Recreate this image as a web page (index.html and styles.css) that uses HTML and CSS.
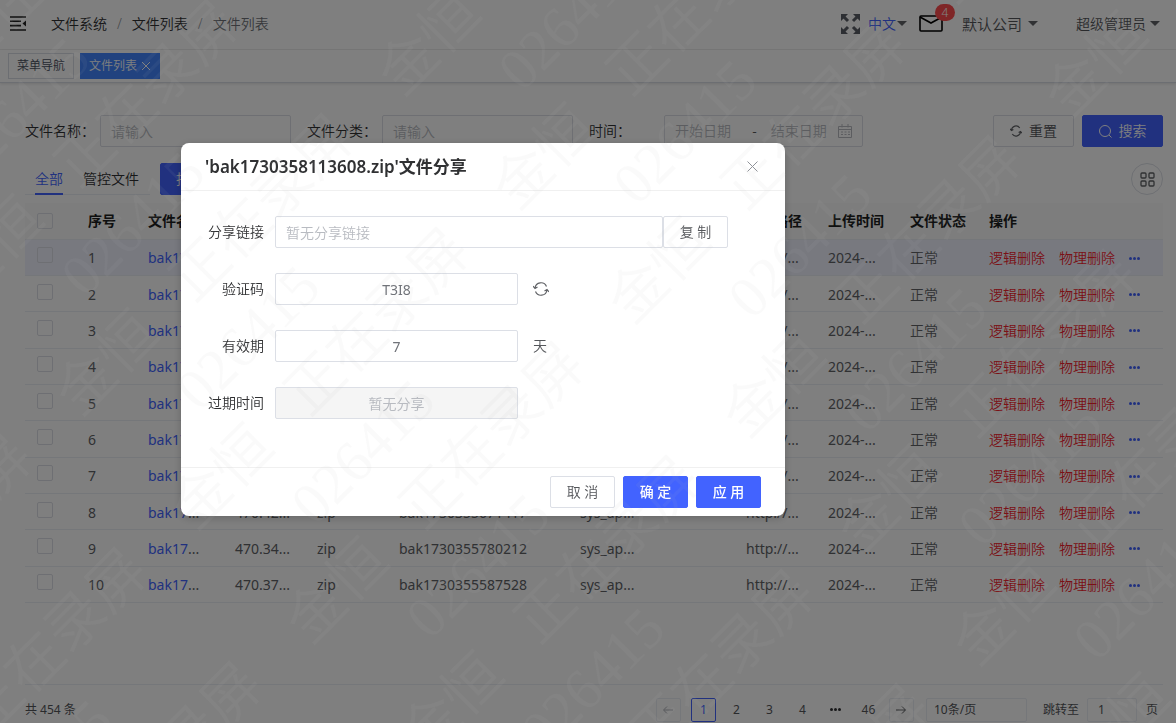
FILE: index.html
```html
<!DOCTYPE html>
<html lang="zh-CN">
<head>
    <meta charset="UTF-8">
    <meta name="viewport" content="width=device-width, initial-scale=1.0">
    <title>文件列表</title>
    <link rel="stylesheet" href="styles.css">
</head>
<body>
    <div class="page">
        <header class="header">
            <button class="icon-btn fold" aria-label="收起菜单">
                <svg width="17" height="15" viewBox="0 0 17 15" fill="none" stroke="#222" stroke-width="1.600"><path d="M0 1h16M0 5.300h11M0 9.600h11M0 14h16"/><path d="M16 4.500v6l-3.500-3z" fill="#222" stroke="none"/></svg>
            </button>
            <nav class="breadcrumb">
                <a href="#">文件系统</a><span>/</span><a href="#">文件列表</a><span>/</span><em>文件列表</em>
            </nav>
            <div class="header-right">
                <button class="icon-btn" aria-label="全屏">
                    <svg width="19" height="20" viewBox="0 0 19 20" fill="#5a5e66" stroke="#5a5e66"><path stroke="none" d="M0 0h7L0 7zM19 0v7l-7-7zM0 20v-7l7 7zM19 20h-7l7-7z"/><path stroke-width="3" d="M2 2l5 5M17 2l-5 5M2 18l5-5M17 18l-5-5"/></svg>
                </button>
                <button class="drop lang">中文<i class="caret"></i></button>
                <button class="icon-btn mail" aria-label="消息">
                    <svg width="24" height="17" viewBox="0 0 24 17" fill="none" stroke="#000" stroke-width="1.600"><rect x="1" y="1" width="22" height="15" rx="1"/><path d="M1 2l11 6 11-6"/></svg>
                    <span class="badge">4</span>
                </button>
                <button class="drop company">默认公司<i class="caret"></i></button>
                <button class="drop user">超级管理员<i class="caret"></i></button>
            </div>
        </header>
        <div class="tags">
            <a class="tag" href="#">菜单导航</a>
            <a class="tag active" href="#">文件列表
                <svg width="8" height="8" viewBox="0 0 8 8" stroke="#fff" fill="none"><path d="M0 0l8 8M8 0L0 8"/></svg>
            </a>
        </div>
        <main class="main">
            <form class="search">
                <div class="field">
                    <label for="name">文件名称：</label>
                    <input class="input" id="name" type="text" placeholder="请输入">
                </div>
                <div class="field">
                    <label for="kind">文件分类：</label>
                    <input class="input" id="kind" type="text" placeholder="请输入">
                </div>
                <div class="field time">
                    <label for="start">时间：</label>
                    <div class="range">
                        <input id="start" type="text" placeholder="开始日期">
                        <span>-</span>
                        <input id="end" type="text" placeholder="结束日期" aria-label="结束日期">
                        <svg width="14" height="14" viewBox="0 0 14 14" fill="none" stroke="#b8bbc0"><path d="M.5 2.500h13v11H.5zM.5 5.500h13M4 0v3.500M10 0v3.500"/><path stroke-dasharray="2 1.500" d="M3 8h9M3 10.500h9"/></svg>
                    </div>
                </div>
                <div class="search-btns">
                    <button class="btn" type="reset">
                        <svg width="12" height="12" viewBox="0 0 16 16" fill="none" stroke="#606266" stroke-width="1.500"><path d="M2 7a6 6 0 0 1 11-3M14 9a6 6 0 0 1-11 3M0 5l2 2.500L4.500 6M16 11l-2-2.500L11.500 10"/></svg>
                        重置
                    </button>
                    <button class="btn primary" type="button">
                        <svg width="13" height="13" viewBox="0 0 13 13" fill="none" stroke="#fff"><circle cx="6" cy="6" r="5.500"/><path d="M10 10l2.500 2.500"/></svg>
                        搜索
                    </button>
                </div>
            </form>
            <div class="toolbar">
                <div class="tabs">
                    <button class="tab current">全部</button>
                    <button class="tab">管控文件</button>
                </div>
                <button class="btn primary">批量删除</button>
                <button class="round" aria-label="列设置">
                    <svg width="15" height="15" viewBox="0 0 15 15" fill="none" stroke="#606266" stroke-width="1.300"><rect x="1" y="1" width="5" height="5" rx="1"/><rect x="9" y="1" width="5" height="5" rx="1"/><rect x="1" y="9" width="5" height="5" rx="1"/><rect x="9" y="9" width="5" height="5" rx="1"/></svg>
                </button>
            </div>
            <table class="table">
                <colgroup>
                    <col class="w-check"><col class="w-no"><col class="w-name"><col class="w-mid"><col class="w-mid"><col class="w-long"><col><col class="w-mid"><col class="w-mid"><col class="w-state"><col class="w-op">
                </colgroup>
                <thead>
                    <tr>
                        <th><input type="checkbox" aria-label="全选"></th>
                        <th>序号</th><th>文件名称</th><th>大小</th><th>类型</th><th>存储名称</th><th>应用</th><th>存储路径</th><th>上传时间</th><th>文件状态</th><th>操作</th>
                    </tr>
                </thead>
                <tbody id="rows"></tbody>
            </table>
            <footer class="pager">
                <span class="total">共 454 条</span>
                <button class="page-btn boxed off" aria-label="上一页"><svg width="10" height="8" viewBox="0 0 10 8" fill="none" stroke="currentColor"><path d="M10 4H1M4 .5L.5 4 4 7.500"/></svg></button>
                <button class="page-btn boxed on">1</button>
                <button class="page-btn">2</button>
                <button class="page-btn">3</button>
                <button class="page-btn">4</button>
                <span class="dots"><i></i><i></i><i></i></span>
                <button class="page-btn">46</button>
                <button class="page-btn boxed" aria-label="下一页"><svg width="10" height="8" viewBox="0 0 10 8" fill="none" stroke="currentColor"><path d="M0 4h9M6 .5L9.500 4 6 7.500"/></svg></button>
                <select class="size" aria-label="每页条数"><option>10条/页</option></select>
                <label for="jump">跳转至</label>
                <input class="jump" id="jump" type="text" value="1">
                <span>页</span>
            </footer>
        </main>
    </div>

    <div class="mask">
        <div class="dialog" role="dialog" aria-labelledby="dialog-title">
            <div class="dialog-head">
                <h2 id="dialog-title">'bak1730358113608.zip'文件分享</h2>
                <button class="icon-btn" aria-label="关闭"><svg width="11" height="11" viewBox="0 0 11 11" fill="none" stroke="#909399"><path d="M.5.5l10 10M10.500.5l-10 10"/></svg></button>
            </div>
            <div class="dialog-body">
                <div class="row">
                    <label for="link">分享链接</label>
                    <div class="group">
                        <input class="input" id="link" type="text" placeholder="暂无分享链接">
                        <button class="btn spaced">复 制</button>
                    </div>
                </div>
                <div class="row">
                    <label for="code">验证码</label>
                    <input class="input center" id="code" type="text" value="T3I8">
                    <button class="icon-btn" aria-label="刷新"><svg width="16" height="14" viewBox="0 0 16 14" fill="none" stroke="#606266" stroke-width="1.200"><path d="M2 6a6 6 0 0 1 11.500-1.500M14 8a6 6 0 0 1-11.500 1.500M0 4l2 2.500L4.500 5M16 10l-2-2.500L11.500 9"/></svg></button>
                </div>
                <div class="row">
                    <label for="days">有效期</label>
                    <input class="input center" id="days" type="text" value="7">
                    <span>天</span>
                </div>
                <div class="row">
                    <label for="expire">过期时间</label>
                    <input class="input center" id="expire" type="text" placeholder="暂无分享" disabled>
                </div>
            </div>
            <div class="dialog-foot">
                <button class="btn spaced">取 消</button>
                <button class="btn primary spaced">确 定</button>
                <button class="btn primary spaced">应 用</button>
            </div>
        </div>
    </div>

    <svg class="watermark" id="watermark" aria-hidden="true"></svg>

    <script>
        // size and storage name of each file
        const files = [
            ['470.58', 'bak1730358113608'],
            ['470.56', 'bak1730357908215'],
            ['470.55', 'bak1730357562340'],
            ['470.53', 'bak1730357210774'],
            ['470.51', 'bak1730356984102'],
            ['470.48', 'bak1730356633951'],
            ['470.45', 'bak1730356247086'],
            ['470.42', 'bak1730355671417'],
            ['470.34', 'bak1730355780212'],
            ['470.37', 'bak1730355587528']
        ];

        document.getElementById('rows').innerHTML = files.map((file, i) => `
            <tr>
                <td><input type="checkbox" aria-label="选择第${i + 1}行"></td>
                <td>${i + 1}</td>
                <td><a href="#">bak17</a>...</td>
                <td>${file[0]}...</td>
                <td>zip</td>
                <td>${file[1]}</td>
                <td>sys_ap...</td>
                <td>http://...</td>
                <td>2024-...</td>
                <td class="thin">正常</td>
                <td class="thin"><div class="ops"><a class="del" href="#">逻辑删除</a><a class="del" href="#">物理删除</a><button class="dots" aria-label="更多"><i></i><i></i><i></i></button></div></td>
            </tr>`).join('');

        // Watermark: three slanted texts, repeated over the whole window
        const marks = [
            ['金恒', 402, 98],
            ['026415', 522, 93],
            ['正在录屏', 516, -16]
        ];
        let watermark = '';
        for (let i = -12; i <= 12; i++) {
            for (let j = -4; j <= 4; j++) {
                marks.forEach(([text, startX, startY]) => {
                    const x = startX + 115 * i + 322 * j;
                    const y = startY + 114 * i - 320 * j;
                    if (x > -170 && x < innerWidth && y > 0 && y < innerHeight + 170) {
                        watermark += `<text transform="translate(${x} ${y}) rotate(-45)">${text}</text>`;
                    }
                });
            }
        }
        document.getElementById('watermark').innerHTML = watermark;
    </script>
</body>
</html>
```
FILE: styles.css
```css
* {
    box-sizing: border-box;
}

body {
    margin: 0;
    font-family: "Noto Sans", "Noto Sans CJK SC", sans-serif;
    font-size: 14px;
    font-weight: 350;
    line-height: 20px;
    color: #54565a;
    background: #fff;
}

button,
input,
select {
    font: inherit;
    color: inherit;
    margin: 0;
}

button {
    padding: 0;
    border: none;
    background: none;
    cursor: pointer;
}

a {
    color: inherit;
    text-decoration: none;
}

svg {
    display: block;
    flex: none;
}

input::placeholder {
    color: #b8bbc1;
    opacity: 1;
}

.page {
    display: flex;
    flex-direction: column;
    height: 100vh;
    overflow: hidden;
}

/* Header */
.header {
    display: flex;
    align-items: center;
    height: 50px;
    padding: 0 16px 2px 10px;
    border-bottom: 1px solid #f0f0f0;
}

.breadcrumb {
    display: flex;
    gap: 10px;
    margin-left: 24px;
    color: #303133;
}

.breadcrumb span {
    color: #909399;
}

.breadcrumb em {
    font-style: normal;
    color: #707379;
}

.header-right {
    display: flex;
    align-items: center;
    margin-left: auto;
}

.drop {
    display: flex;
    align-items: center;
    gap: 4px;
}

.caret {
    border: 5px solid transparent;
    border-top-color: #606266;
    border-bottom: none;
}

.lang {
    gap: 1px;
    margin: 0 12px 0 8px;
    color: #4263ff;
}

.mail {
    position: relative;
}

.badge {
    position: absolute;
    top: -11px;
    right: -12px;
    width: 20px;
    height: 17px;
    border-radius: 9px;
    font-size: 12px;
    line-height: 17px;
    color: #fff;
    background: #ff4d4f;
}

.company {
    gap: 6px;
    margin-left: 19px;
    font-size: 15px;
}

.user {
    margin-left: 38px;
}

/* Opened pages */
.tags {
    display: flex;
    gap: 6px;
    height: 33px;
    padding: 3px 8px;
    border-bottom: 1px solid #d8dce5;
    box-shadow: 0 1px 3px rgba(0, 0, 0, 0.12);
}

.tag {
    display: flex;
    align-items: center;
    gap: 5px;
    height: 26px;
    padding: 0 8px;
    border: 1px solid #d8dce5;
    font-size: 12px;
    color: #495060;
}

.tag.active {
    padding: 0 9px 0 8px;
    border-color: #4285ff;
    color: #fff;
    background: #4285ff;
}

.main {
    display: flex;
    flex: 1;
    flex-direction: column;
    min-height: 0;
    padding: 32px 13px 0 25px;
}

/* Search form */
.search,
.field,
.search-btns {
    display: flex;
    align-items: center;
}

.search {
    gap: 16px;
    color: #303133;
}

.field {
    gap: 5px;
}

.time {
    gap: 33px;
}

.input {
    width: 191px;
    height: 32px;
    padding: 0 10px;
    border: 1px solid #dcdfe6;
    border-radius: 2px;
    background: #fff;
}

.range {
    display: flex;
    align-items: center;
    width: 199px;
    height: 32px;
    padding: 0 10px;
    border: 1px solid #dcdfe6;
    border-radius: 2px;
}

.range input {
    flex: 1;
    width: 0;
    padding: 0;
    border: none;
    background: none;
}

.range span {
    margin: 0 14px 0 6px;
}

.range svg {
    margin-left: -4px;
}

.search-btns {
    gap: 8px;
    margin-left: auto;
}

.search-btns .btn {
    width: 81px;
}

.btn {
    display: flex;
    align-items: center;
    justify-content: center;
    gap: 7px;
    height: 32px;
    padding: 0 15px;
    border: 1px solid #dcdfe6;
    border-radius: 2px;
    white-space: nowrap;
    color: #54565a;
    background: #fff;
}

.btn.primary {
    border-color: #4263ff;
    color: #fff;
    background: #4263ff;
}

/* Tabs above the table */
.toolbar {
    display: flex;
    gap: 10px;
    margin: 16px 0 8px;
}

.tabs {
    display: flex;
    gap: 20px;
    width: 125px;
    padding-left: 10px;
    border-bottom: 1px solid #ebeef5;
}

.tab {
    margin-bottom: -1px;
    padding-top: 2px;
    border-bottom: 2px solid transparent;
    color: #303133;
    white-space: nowrap;
}

.tab.current {
    border-color: #4263ff;
    color: #4263ff;
}

.round {
    display: grid;
    place-items: center;
    width: 32px;
    height: 32px;
    margin-left: auto;
    border: 1px solid #dcdfe6;
    border-radius: 50%;
}

/* Table */
.table {
    width: 100%;
    height: 400px;
    table-layout: fixed;
    border-collapse: collapse;
    white-space: nowrap;
}

.w-check { width: 53px; }
.w-no { width: 60px; }
.w-name { width: 87px; }
.w-mid { width: 82px; }
.w-long { width: 181px; }
.w-state { width: 79px; }
.w-op { width: 184px; }

.table th,
.table td {
    height: 36px;
    padding: 0 10px;
    border-bottom: 1px solid #ebeef5;
    text-align: left;
}

.table td {
    padding-top: 2px;
    font-weight: normal;
    color: #606266;
}

.table th {
    font-weight: bold;
    color: #1d1e20;
    background: #fafafa;
}

.table .thin {
    font-weight: 350;
}

.table tbody tr:first-child {
    background: #f0f3ff;
}

.table td a {
    color: #4263ff;
}

.table td a.del {
    color: #f5222d;
}

.table input {
    appearance: none;
    display: block;
    width: 16px;
    height: 16px;
    margin: 0 0 6px 2px;
    border: 1px solid #dcdfe6;
    border-radius: 2px;
}

.table th input {
    margin-bottom: 0;
}

.ops {
    display: flex;
    align-items: center;
    gap: 14px;
}

.dots {
    display: flex;
    align-items: center;
    justify-content: center;
    gap: 1px;
    color: #303133;
}

.dots i {
    width: 3px;
    height: 3px;
    border-radius: 50%;
    background: currentColor;
}

.ops .dots {
    color: #4263ff;
}

/* Pagination */
.pager {
    display: flex;
    align-items: center;
    height: 39px;
    margin-top: auto;
    padding: 11px 5px 0 0;
    border-top: 1px solid #ebeef5;
    font-size: 12px;
    font-weight: normal;
}

.total {
    margin-right: auto;
}

.page-btn,
.pager .dots {
    min-width: 25px;
    height: 24px;
    margin-right: 8px;
}

.page-btn {
    display: grid;
    place-items: center;
}

.boxed {
    border: 1px solid #ebeef5;
    border-radius: 2px;
}

.page-btn.off {
    margin-right: 10px;
    color: #b0b3b9;
}

.on {
    border-color: #4263ff;
    color: #4263ff;
}

.size,
.jump {
    height: 24px;
    border: 1px solid #ebeef5;
    border-radius: 2px;
    background: #fff;
}

.size {
    appearance: none;
    width: 101px;
    margin: 0 16px 0 4px;
    padding: 0 7px;
}

.jump {
    width: 50px;
    margin: 0 9px 0 8px;
    padding: 0 10px;
}

/* Share dialog */
.mask {
    position: fixed;
    inset: 0;
    display: flex;
    align-items: flex-start;
    padding: 143px 181px 0;
    background: rgba(0, 0, 0, 0.5);
}

.dialog {
    width: 604px;
    border-radius: 8px;
    background: #fff;
    box-shadow: 0 2px 8px rgba(0, 0, 0, 0.2);
}

.dialog-head {
    display: flex;
    align-items: center;
    justify-content: space-between;
    height: 48px;
    padding: 0 27px 0 24px;
    border-bottom: 1px solid #f0f0f0;
}

.dialog-head h2 {
    margin: 0;
    font-size: 17px;
    font-weight: 600;
    color: #303133;
}

.dialog-body {
    display: flex;
    flex-direction: column;
    gap: 25px;
    padding: 25px 57px 48px 24px;
}

.row {
    display: flex;
    align-items: center;
}

.row label {
    width: 59px;
    margin-right: 11px;
    text-align: right;
    color: #303133;
}

.group {
    display: flex;
    flex: 1;
}

.group .input {
    flex: 1;
}

.input.center {
    width: 243px;
    margin-right: 15px;
    font-weight: normal;
    text-align: center;
    color: #707379;
}

.input:disabled {
    background: #f5f5f5;
}

.spaced {
    width: 65px;
}

.dialog-foot {
    display: flex;
    justify-content: flex-end;
    gap: 8px;
    padding: 8px 24px;
    border-top: 1px solid #f0f0f0;
}

.dialog-foot .primary {
    font-weight: 500;
}

.watermark {
    position: fixed;
    inset: 0;
    width: 100%;
    height: 100%;
    pointer-events: none;
}

.watermark text {
    font-family: "Liberation Serif", "Noto Sans CJK SC", serif;
    font-size: 58px;
    fill: #b4b4b4;
    fill-opacity: 0.07;
}
```
